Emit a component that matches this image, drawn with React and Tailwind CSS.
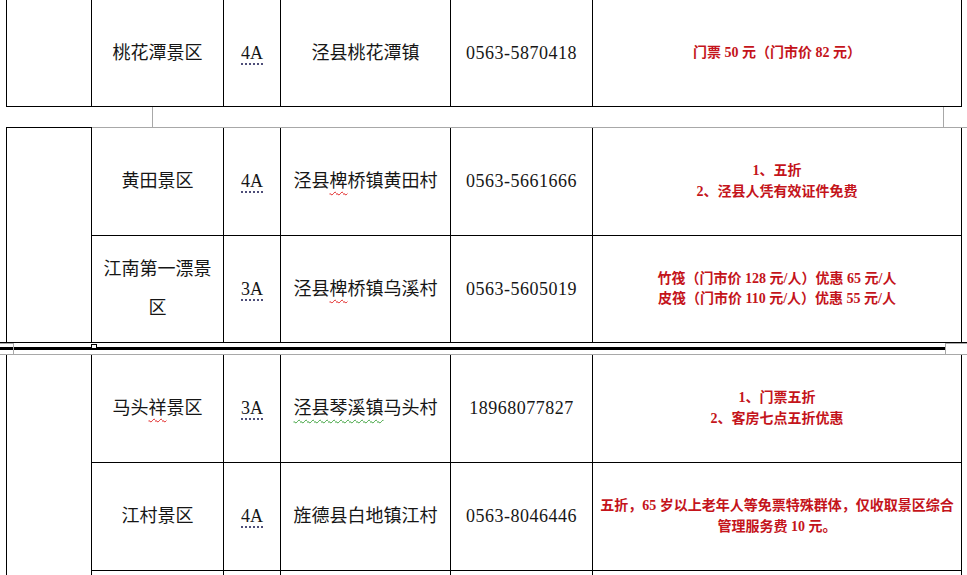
const serif = "font-['Liberation_Serif','Noto_Sans_CJK_SC',serif]";

const rows = {
  taohua: {
    name: '桃花潭景区',
    level: '4A',
    addr: '泾县桃花潭镇',
    phone: '0563-5870418',
    offer: ['门票 50 元（门市价 82 元）'],
  },
  huangtian: {
    name: '黄田景区',
    level: '4A',
    addr: (
      <>
        泾县<span className="underline decoration-wavy decoration-[#e02020] decoration-1 underline-offset-4">椑</span>桥镇黄田村
      </>
    ),
    phone: '0563-5661666',
    offer: ['1、五折', '2、泾县人凭有效证件免费'],
  },
  jiangnan: {
    name: '江南第一漂景区',
    level: '3A',
    addr: (
      <>
        泾县<span className="underline decoration-wavy decoration-[#e02020] decoration-1 underline-offset-4">椑</span>桥镇乌溪村
      </>
    ),
    phone: '0563-5605019',
    offer: ['竹筏（门市价 128 元/人）优惠 65 元/人', '皮筏（门市价 110 元/人）优惠 55 元/人'],
  },
  matou: {
    name: (
      <>
        马头<span className="underline decoration-wavy decoration-[#e02020] decoration-1 underline-offset-4">祥</span>景区
      </>
    ),
    level: '3A',
    addr: (
      <>
        <span className="underline decoration-wavy decoration-[#3aa03a] decoration-1 underline-offset-[5px]">泾县琴溪镇</span>马头村
      </>
    ),
    phone: '18968077827',
    offer: ['1、门票五折', '2、客房七点五折优惠'],
  },
  jiangcun: {
    name: '江村景区',
    level: '4A',
    addr: '旌德县白地镇江村',
    phone: '0563-8046446',
    offer: ['五折，65 岁以上老年人等免票特殊群体，仅收取景区综合', '管理服务费 10 元。'],
  },
};

function Cells({ row }) {
  return (
    <>
      <div className="w-[132px] border-r border-black flex items-center justify-center px-[8px] text-center text-[18px] leading-[39px]">
        <span>{row.name}</span>
      </div>
      <div className="w-[57px] border-r border-black flex items-center justify-center text-[18px]">
        <span className="underline decoration-dotted decoration-[#3b3b6b] underline-offset-[5px]">{row.level}</span>
      </div>
      <div className="w-[170px] border-r border-black flex items-center justify-center text-[18px] whitespace-nowrap">
        <span>{row.addr}</span>
      </div>
      <div className="w-[142px] border-r border-black flex items-center justify-center text-[18px] tracking-[0.5px]">
        <span>{row.phone}</span>
      </div>
      <div className="w-[369px] border-r border-black flex flex-col items-center justify-center text-center text-[14px] leading-[20.5px] font-bold text-[#c4141b] whitespace-nowrap">
        {row.offer.map((line) => (
          <div key={line}>{line}</div>
        ))}
      </div>
    </>
  );
}

export default function App() {
  return (
    <div className={`w-[967px] h-[575px] overflow-hidden bg-white text-[#161616] ${serif}`}>
      {/* end of the first table */}
      <div className="flex h-[107px]">
        <div className="w-[6px]" />
        <div className="flex border-l border-b border-black">
          <div className="w-[85px] border-r border-black" />
          <Cells row={rows.taohua} />
        </div>
      </div>

      {/* gap between tables */}
      <div className="flex h-[20px]">
        <div className="w-[152px]" />
        <div className="w-[792px] border-x border-[#a8a8a8]" />
      </div>

      {/* second table */}
      <div className="flex">
        <div className="w-[6px]" />
        <div className="w-[86px] border-l border-t border-r border-black" />
        <div className="flex-1 border-t border-[#a8a8a8]">
          <div className="flex w-[870px] h-[108px] border-b border-black">
            <Cells row={rows.huangtian} />
          </div>
          <div className="flex w-[870px] h-[106px]">
            <Cells row={rows.jiangnan} />
          </div>
        </div>
      </div>

      {/* table break */}
      <div className="relative h-[13px] border-t border-b border-t-black border-b-[#a8a8a8]">
        <div className="mt-[4px] h-[3px] bg-black" />
        <div className="absolute left-0 top-0 w-[14px] h-[12px] border border-l-0 border-[#a8a8a8]" />
        <div className="absolute left-[91px] top-[1px] w-[6px] h-[5px] border border-black bg-white" />
        <div className="absolute right-0 top-0 w-[22px] h-[12px] border border-r-0 border-[#a8a8a8] bg-white" />
      </div>

      {/* third table */}
      <div className="flex h-[220px]">
        <div className="w-[6px]" />
        <div className="w-[86px] border-l border-r border-black" />
        <div className="flex-1 flex flex-col">
          <div className="flex w-[870px] h-[108px] border-b border-black">
            <Cells row={rows.matou} />
          </div>
          <div className="flex w-[870px] h-[108px] border-b border-black">
            <Cells row={rows.jiangcun} />
          </div>
          <div className="flex w-[870px] flex-1">
            <div className="w-[132px] border-r border-black" />
            <div className="w-[57px] border-r border-black" />
            <div className="w-[170px] border-r border-black" />
            <div className="w-[142px] border-r border-black" />
            <div className="w-[369px] border-r border-black" />
          </div>
        </div>
      </div>
    </div>
  );
}
